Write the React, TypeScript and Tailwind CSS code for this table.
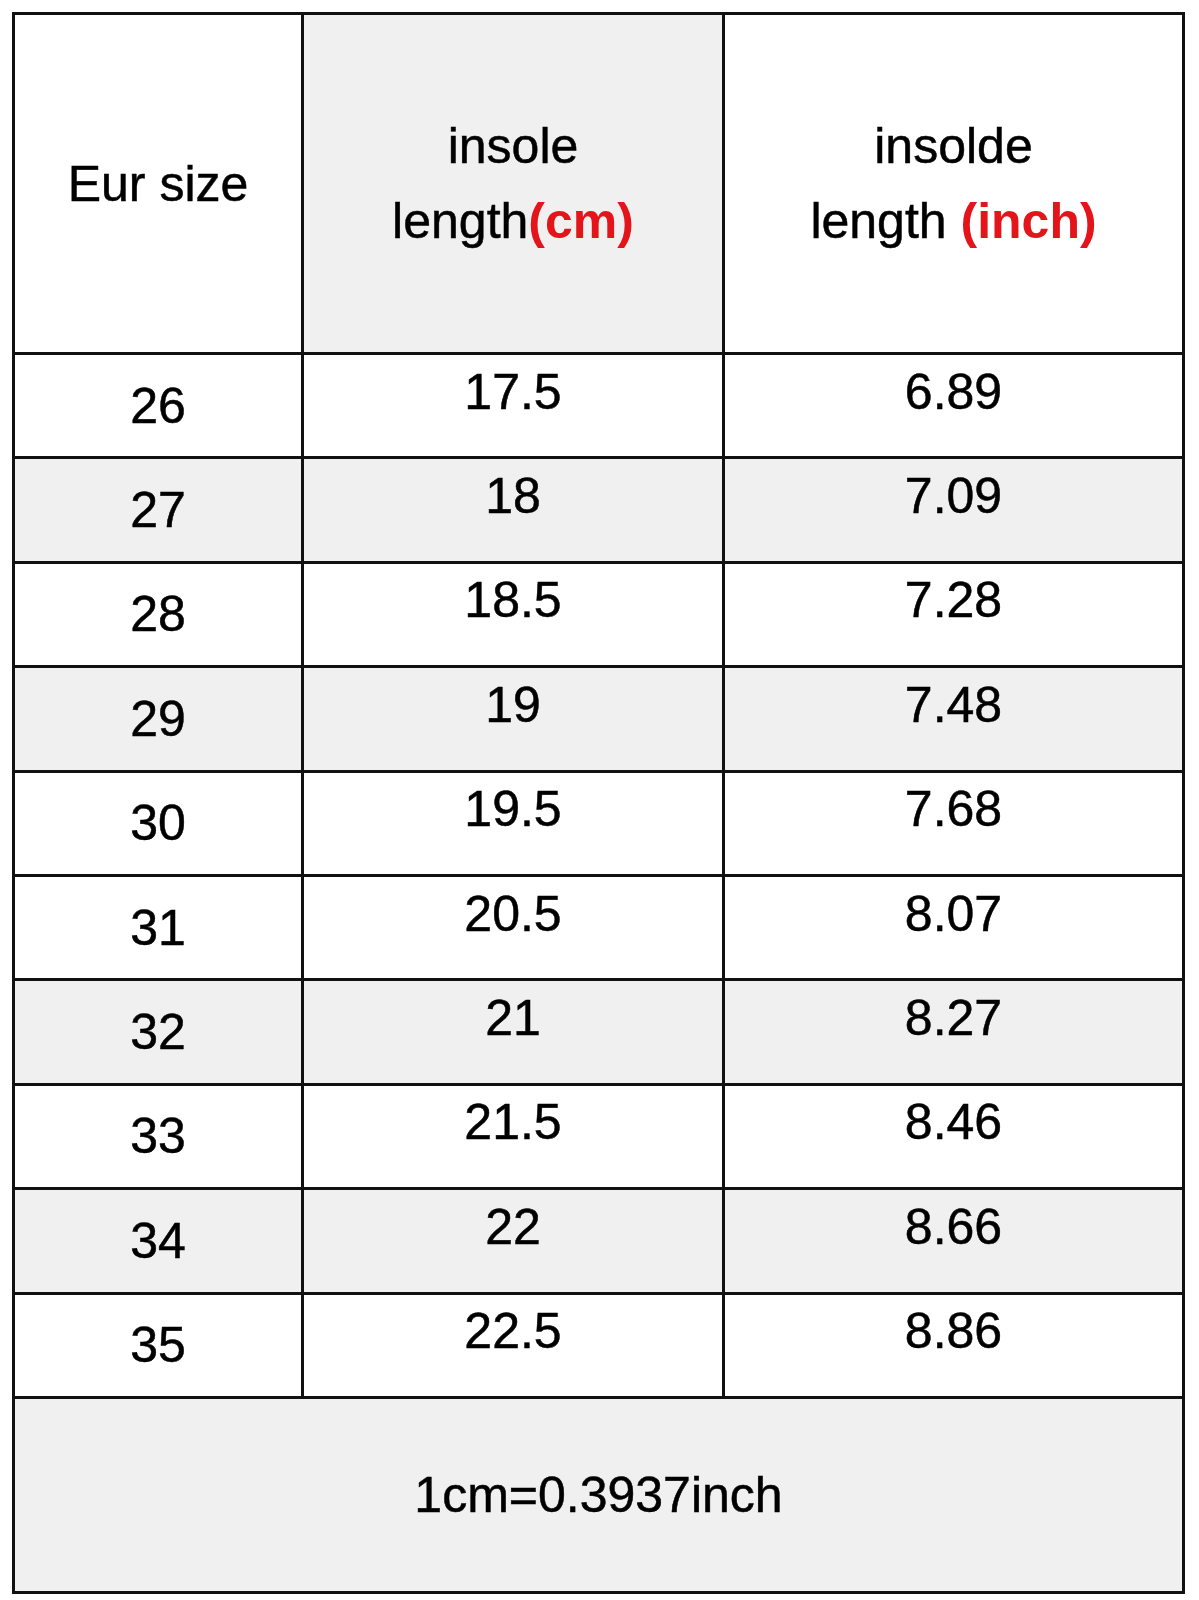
const rows = [
  { eur: "26", cm: "17.5", inch: "6.89", gray: false },
  { eur: "27", cm: "18", inch: "7.09", gray: true },
  { eur: "28", cm: "18.5", inch: "7.28", gray: false },
  { eur: "29", cm: "19", inch: "7.48", gray: true },
  { eur: "30", cm: "19.5", inch: "7.68", gray: false },
  { eur: "31", cm: "20.5", inch: "8.07", gray: false },
  { eur: "32", cm: "21", inch: "8.27", gray: true },
  { eur: "33", cm: "21.5", inch: "8.46", gray: false },
  { eur: "34", cm: "22", inch: "8.66", gray: true },
  { eur: "35", cm: "22.5", inch: "8.86", gray: false },
];

const cols = "grid grid-cols-[289px_421px_1fr]";

export default function App() {
  return (
    <div className="min-h-[1600px] w-[1199px] bg-white pl-[12px] pt-[12px] font-['Liberation_Sans',Arial,sans-serif] text-[50px] leading-none text-black [-webkit-text-stroke:0.5px_#000]">
      <div className="w-[1173px] border-[3px] border-[#111]">
        {/* header */}
        <div className={`${cols} h-[340px] border-b-[3px] border-[#111]`}>
          <div className="flex items-center justify-center border-r-[3px] border-[#111] bg-white">
            Eur size
          </div>
          <div className="flex items-center justify-center border-r-[3px] border-[#111] bg-[#f0f0f0] text-center leading-[75px]">
            <div>
              insole
              <br />
              length
              <span className="font-bold text-[#e3151a] [-webkit-text-stroke:0px]">(cm)</span>
            </div>
          </div>
          <div className="flex items-center justify-center bg-white text-center leading-[75px]">
            <div>
              insolde
              <br />
              length{" "}
              <span className="font-bold text-[#e3151a] [-webkit-text-stroke:0px]">(inch)</span>
            </div>
          </div>
        </div>

        {rows.map((r) => (
          <div
            key={r.eur}
            className={`${cols} h-[104.4px] border-b-[3px] border-[#111] ${
              r.gray ? "bg-[#f0f0f0]" : "bg-white"
            }`}
          >
            <div className="flex items-center justify-center border-r-[3px] border-[#111]">
              {r.eur}
            </div>
            <div className="flex items-center justify-center border-r-[3px] border-[#111] pb-[28px]">
              {r.cm}
            </div>
            <div className="flex items-center justify-center pb-[28px]">
              {r.inch}
            </div>
          </div>
        ))}

        {/* footer */}
        <div className="flex h-[192.5px] items-center justify-center bg-[#f0f0f0]">
          1cm=0.3937inch
        </div>
      </div>
    </div>
  );
}
